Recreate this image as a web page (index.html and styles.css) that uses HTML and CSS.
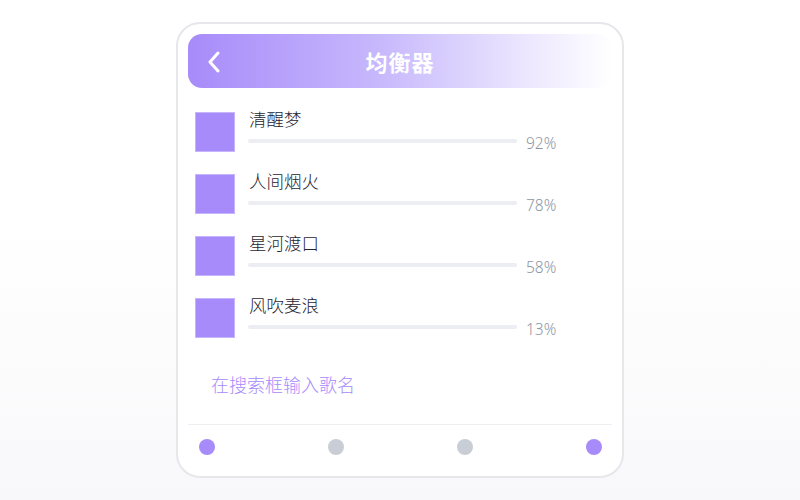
FILE: index.html
```html
<!DOCTYPE html>
<html lang="zh-CN">
<head>
    <meta charset="UTF-8">
    <meta name="viewport" content="width=device-width, initial-scale=1.0">
    <title>均衡器</title>
    <link rel="stylesheet" href="styles.css">
</head>
<body>
    <div class="phone">
        <div class="header">
            <span class="back">
                <svg width="16" height="22" viewBox="0 0 16 22">
                    <path d="M11 2 L3 11 L11 20" fill="none" stroke="#fff" stroke-width="3" stroke-linecap="round" stroke-linejoin="round"/>
                </svg>
            </span>
            <h1>均衡器</h1>
        </div>

        <div class="list">
            <div class="song">
                <div class="cover"></div>
                <div class="info">
                    <div class="name">清醒梦</div>
                    <div class="meter">
                        <div class="track"></div>
                        <span class="pct">92%</span>
                    </div>
                </div>
            </div>
            <div class="song">
                <div class="cover"></div>
                <div class="info">
                    <div class="name">人间烟火</div>
                    <div class="meter">
                        <div class="track"></div>
                        <span class="pct">78%</span>
                    </div>
                </div>
            </div>
            <div class="song">
                <div class="cover"></div>
                <div class="info">
                    <div class="name">星河渡口</div>
                    <div class="meter">
                        <div class="track"></div>
                        <span class="pct">58%</span>
                    </div>
                </div>
            </div>
            <div class="song">
                <div class="cover"></div>
                <div class="info">
                    <div class="name">风吹麦浪</div>
                    <div class="meter">
                        <div class="track"></div>
                        <span class="pct">13%</span>
                    </div>
                </div>
            </div>
        </div>

        <p class="hint">在搜索框输入歌名</p>

        <div class="dots">
            <span class="dot on"></span>
            <span class="dot"></span>
            <span class="dot"></span>
            <span class="dot on"></span>
        </div>
    </div>
</body>
</html>
```

FILE: styles.css
```css
body {
    margin: 0;
    padding: 0;
    min-height: 500px;
    font-family: "Noto Sans", "Noto Sans CJK SC", sans-serif;
    background: linear-gradient(180deg, #ffffff 0%, #ffffff 45%, #f8f8fa 100%);
}
.phone {
    box-sizing: border-box;
    width: 448px;
    height: 456px;
    margin: 22px auto 0;
    padding: 10px;
    background: white;
    border: 2px solid #e6e7eb;
    border-radius: 24px;
}
.header {
    position: relative;
    height: 54px;
    border-radius: 14px;
    background: linear-gradient(90deg, #a78bfa 0%, #c7b8fc 45%, #ece7fe 80%, #ffffff 100%);
    display: flex;
    align-items: center;
    justify-content: center;
}
.header h1 {
    margin: 0;
    color: white;
    font-size: 22px;
    font-weight: bold;
    letter-spacing: 1px;
}
.back {
    position: absolute;
    left: 19px;
    top: 17px;
    display: flex;
}
.list {
    margin-top: 24px;
    padding: 0 7px;
    display: flex;
    flex-direction: column;
    gap: 21px;
}
.song {
    display: flex;
    align-items: flex-start;
    gap: 13px;
}
.cover {
    box-sizing: border-box;
    width: 40px;
    height: 40px;
    background: #a78bfa;
    border: 1px solid #c4b5fd;
}
.info {
    flex: 1;
}
.name {
    margin-top: -2px;
    font-size: 17.5px;
    font-weight: 300;
    line-height: 18px;
    color: #1f2430;
    padding-left: 1px;
}
.meter {
    display: flex;
    align-items: flex-start;
    margin-top: 5px;
}
.track {
    width: 269px;
    height: 4px;
    margin-top: 6px;
    background: #eceef3;
    border-radius: 2px;
}
.pct {
    margin-left: 9px;
    font-size: 15.5px;
    font-weight: 300;
    line-height: 20px;
    color: #8e95a2;
}
.hint {
    margin: 34px 0 0 23px;
    font-size: 18px;
    font-weight: 300;
    line-height: 24px;
    color: #a78bfa;
}
.dots {
    margin-top: 27px;
    padding: 14px 10px 0 11px;
    border-top: 1px solid #eeeff2;
    display: flex;
    justify-content: space-between;
}
.dot {
    width: 16px;
    height: 16px;
    border-radius: 50%;
    background: #c9ced6;
}
.dot.on {
    background: #a78bfa;
}
```
